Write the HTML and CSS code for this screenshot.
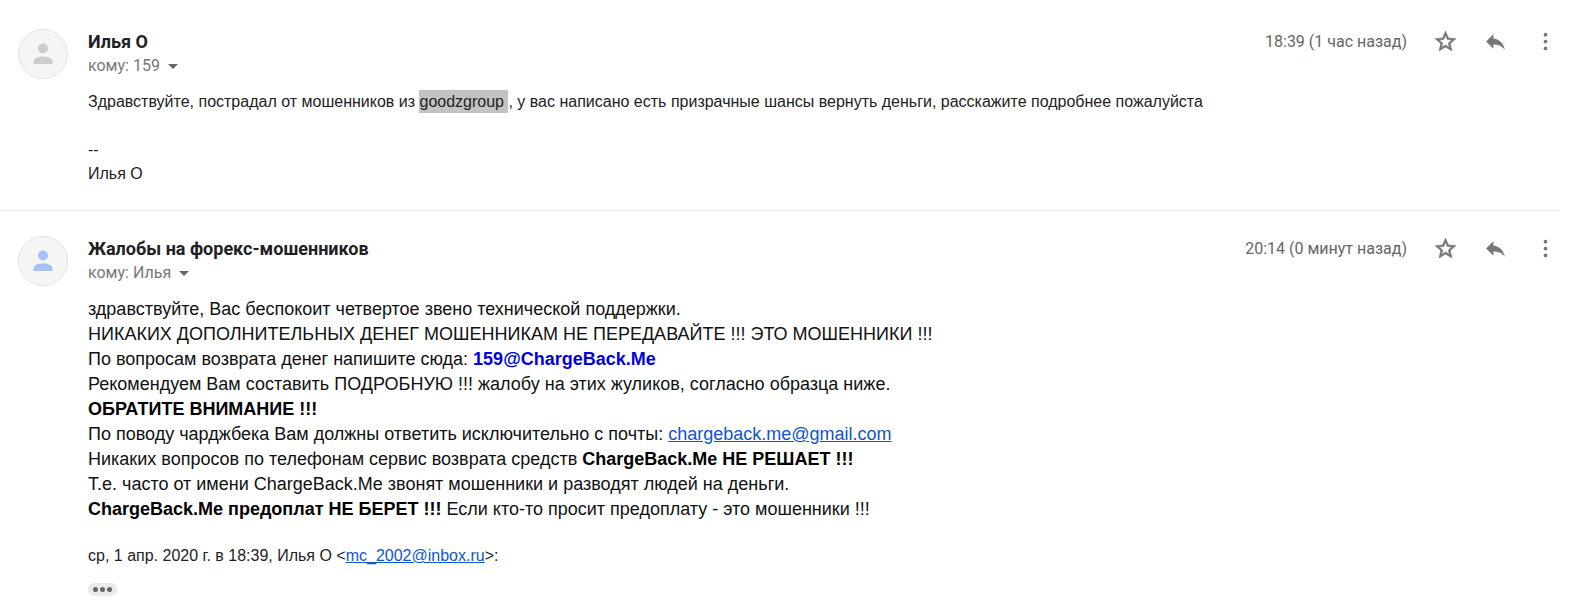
FILE: index.html
```html
<!DOCTYPE html>
<html lang="ru">
<head>
<meta charset="utf-8">
<title>Переписка</title>
<link rel="stylesheet" href="styles.css">
</head>
<body>
<svg class="sprite" aria-hidden="true">
  <symbol id="person" viewBox="0 0 20 22">
    <circle cx="10" cy="5.500" r="5"/>
    <path d="M.5 21v-2.500c0-3.500 4.500-5 9.500-5s9.500 1.500 9.500 5V21z"/>
  </symbol>
  <symbol id="star" viewBox="0 0 24 24">
    <path stroke="currentColor" stroke-width=".6" d="M22 9.240l-7.190-.620L12 2 9.190 8.630 2 9.240l5.460 4.730L5.820 21 12 17.270 18.180 21l-1.630-7.030L22 9.240zM12 15.400l-3.760 2.270 1-4.280-3.320-2.880 4.380-.380L12 6.100l1.710 4.040 4.380.380-3.320 2.880 1 4.280L12 15.400z"/>
  </symbol>
  <symbol id="reply" viewBox="0 0 24 24">
    <path d="M10 9V5l-7 7 7 7v-4.100c5 0 8.500 1.600 11 5.100-1-5-4-10-11-11z"/>
  </symbol>
  <symbol id="more" viewBox="0 0 24 24">
    <circle cx="12" cy="5.400" r="1.800"/>
    <circle cx="12" cy="12" r="1.800"/>
    <circle cx="12" cy="18.600" r="1.800"/>
  </symbol>
</svg>
<main class="thread">
  <article class="message">
    <div class="avatar"><svg class="person"><use href="#person"/></svg></div>
    <div class="content">
      <header class="head">
        <div class="who">
          <h2 class="name">Илья О</h2>
          <button class="to" type="button">кому: 159 <span class="caret"></span></button>
        </div>
        <div class="tools">
          <time class="date">18:39 (1 час назад)</time>
          <button class="tool" type="button" aria-label="Пометить"><svg class="icon"><use href="#star"/></svg></button>
          <button class="tool" type="button" aria-label="Ответить"><svg class="icon"><use href="#reply"/></svg></button>
          <button class="tool" type="button" aria-label="Ещё"><svg class="icon"><use href="#more"/></svg></button>
        </div>
      </header>
      <div class="body">
        <p>Здравствуйте, пострадал от мошенников из <mark class="selected">goodzgroup </mark>, у вас написано есть призрачные шансы вернуть деньги, расскажите подробнее пожалуйста</p>
        <p class="signature">--<br>Илья О</p>
      </div>
    </div>
  </article>
  <article class="message">
    <div class="avatar blue"><svg class="person"><use href="#person"/></svg></div>
    <div class="content">
      <header class="head">
        <div class="who">
          <h2 class="name">Жалобы на форекс-мошенников</h2>
          <button class="to" type="button">кому: Илья <span class="caret"></span></button>
        </div>
        <div class="tools">
          <time class="date">20:14 (0 минут назад)</time>
          <button class="tool" type="button" aria-label="Пометить"><svg class="icon"><use href="#star"/></svg></button>
          <button class="tool" type="button" aria-label="Ответить"><svg class="icon"><use href="#reply"/></svg></button>
          <button class="tool" type="button" aria-label="Ещё"><svg class="icon"><use href="#more"/></svg></button>
        </div>
      </header>
      <div class="body large">
        <p>здравствуйте, Вас беспокоит четвертое звено технической поддержки.</p>
        <p>НИКАКИХ ДОПОЛНИТЕЛЬНЫХ ДЕНЕГ МОШЕННИКАМ НЕ ПЕРЕДАВАЙТЕ !!! ЭТО МОШЕННИКИ !!!</p>
        <p>По вопросам возврата денег напишите сюда: <b class="address">159@ChargeBack.Me</b></p>
        <p>Рекомендуем Вам составить ПОДРОБНУЮ !!! жалобу на этих жуликов, согласно образца ниже.</p>
        <p><b>ОБРАТИТЕ ВНИМАНИЕ !!!</b></p>
        <p>По поводу чарджбека Вам должны ответить исключительно с почты: <a class="link" href="mailto:chargeback.me@gmail.com">chargeback.me@gmail.com</a></p>
        <p>Никаких вопросов по телефонам сервис возврата средств <b>ChargeBack.Me НЕ РЕШАЕТ !!!</b></p>
        <p>Т.е. часто от имени ChargeBack.Me звонят мошенники и разводят людей на деньги.</p>
        <p><b>ChargeBack.Me предоплат НЕ БЕРЕТ !!!</b> Если кто-то просит предоплату - это мошенники !!!</p>
      </div>
      <div class="body quote">
        <p>ср, 1 апр. 2020 г. в 18:39, Илья О &lt;<a class="link" href="mailto:mc_2002@inbox.ru">mc_2002@inbox.ru</a>&gt;:</p>
        <button class="expand" type="button" aria-label="Показать скрытый текст"><span class="dot"></span><span class="dot"></span><span class="dot"></span></button>
      </div>
    </div>
  </article>
</main>
</body>
</html>
```
FILE: styles.css
```css
* { box-sizing: border-box; }
body { margin: 0; background: #fff; color: #222; font-family: "Liberation Sans", Arial, sans-serif; }
p, h2 { margin: 0; }
button { border: 0; padding: 0; background: none; font: inherit; color: inherit; cursor: pointer; }
.sprite { display: none; }
.thread { margin-right: 16px; }
.message { display: flex; gap: 20px; padding: 25px 0 0 18px; }
.message:first-child { padding: 29px 0 24px 18px; border-bottom: 1px solid #ececec; }
.avatar { flex: none; display: flex; align-items: center; justify-content: center; width: 50px; height: 50px; border: 1px solid #e4e4e4; border-radius: 50%; background: #f5f5f5; color: #ccc; }
.avatar.blue { color: #a8c1f5; }
.person { width: 20px; height: 22px; fill: currentColor; }
.content { flex: 1; min-width: 0; }
.head { display: flex; justify-content: space-between; align-items: flex-start; font-family: Roboto, sans-serif; }
.name { font-size: 18px; line-height: 26px; font-weight: 700; color: #202124; }
.to { display: flex; align-items: center; gap: 8px; font-size: 16px; line-height: 22px; color: #777; }
.caret { border: 5px solid transparent; border-top-color: #666; border-bottom: 0; }
.tools { display: flex; align-items: center; gap: 25px; height: 25px; padding-right: 2px; }
.date { margin-right: 1px; font-size: 16px; line-height: 24px; color: #666; }
.tool { display: flex; width: 25px; height: 25px; color: #777; }
.icon { width: 25px; height: 25px; fill: currentColor; }
.body { margin-top: 13px; font-size: 16px; line-height: 24px; }
.selected { padding: 3px 0; background: #c3c3c3; color: inherit; }
.signature { margin-top: 24px; }
.body.large { font-size: 18px; line-height: 25px; color: #111; }
.body.large b { color: #000; }
.body.large .address { color: #00d; }
.link { color: #15c; }
.body.quote { margin-top: 22px; }
.expand { display: flex; align-items: center; justify-content: center; gap: 2px; width: 29px; height: 13px; margin-top: 15px; border-radius: 6px; background: #e8eaed; }
.dot { width: 5px; height: 5px; border-radius: 50%; background: #666; }
```
